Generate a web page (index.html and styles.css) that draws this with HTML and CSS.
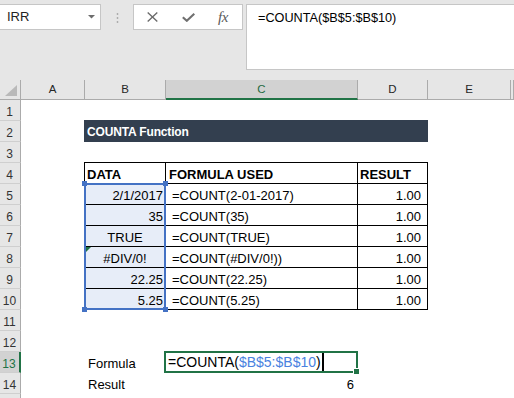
FILE: index.html
```html
<!DOCTYPE html>
<html>
<head>
<meta charset="utf-8">
<link rel="stylesheet" href="styles.css">
</head>
<body>
<div class="app">
  <header class="fbar">
    <div class="namebox">
      <span class="nb-text">IRR</span>
      <svg class="nb-caret" width="7" height="4" viewBox="0 0 7 4"><path d="M0 0H7L3.5 3.5Z"/></svg>
    </div>
    <svg class="grip" width="3" height="10" viewBox="0 0 3 10"><circle cx="1.5" cy="1" r="0.9"/><circle cx="1.5" cy="5" r="0.9"/><circle cx="1.5" cy="9" r="0.9"/></svg>
    <div class="fbtns">
      <svg class="ic-x" width="11" height="10" viewBox="0 0 11 10"><path d="M0.7 0.6L10.3 9.4M10.3 0.6L0.7 9.4"/></svg>
      <svg class="ic-check" width="13" height="9" viewBox="0 0 13 9"><path d="M0.8 4.2L4.8 7.8L12.3 0.8"/></svg>
      <span class="ic-fx">fx</span>
    </div>
    <div class="finput">=COUNTA($B$5:$B$10)</div>
  </header>

  <div class="sheet">
    <div class="corner"><svg width="12" height="11" viewBox="0 0 12 11"><path d="M0 11H12V0Z"/></svg></div>
    <div class="ch">A</div>
    <div class="ch">B</div>
    <div class="ch ch-sel">C</div>
    <div class="ch">D</div>
    <div class="ch">E</div>
    <div class="ch"></div>

    <div class="rowheads">
      <div class="rh">1</div>
      <div class="rh">2</div>
      <div class="rh">3</div>
      <div class="rh">4</div>
      <div class="rh">5</div>
      <div class="rh">6</div>
      <div class="rh">7</div>
      <div class="rh">8</div>
      <div class="rh">9</div>
      <div class="rh">10</div>
      <div class="rh">11</div>
      <div class="rh">12</div>
      <div class="rh sel">13</div>
      <div class="rh">14</div>
      <div class="rh"></div>
    </div>

    <div class="title">COUNTA Function</div>

    <div class="dtable">
      <div class="td th">DATA</div>
      <div class="td th hc">FORMULA USED</div>
      <div class="td th d">RESULT</div>

      <div class="td r fill">2/1/2017</div>
      <div class="td fc">=COUNT(2-01-2017)</div>
      <div class="td d r dv">1.00</div>

      <div class="td r fill">35</div>
      <div class="td fc">=COUNT(35)</div>
      <div class="td d r dv">1.00</div>

      <div class="td c fill">TRUE</div>
      <div class="td fc">=COUNT(TRUE)</div>
      <div class="td d r dv">1.00</div>

      <div class="td c fill"><span class="errtri"></span>#DIV/0!</div>
      <div class="td fc">=COUNT(#DIV/0!))</div>
      <div class="td d r dv">1.00</div>

      <div class="td r fill">22.25</div>
      <div class="td fc">=COUNT(22.25)</div>
      <div class="td d r dv">1.00</div>

      <div class="td r fill">5.25</div>
      <div class="td fc">=COUNT(5.25)</div>
      <div class="td d r dv">1.00</div>
    </div>

    <div class="refsel">
      <span class="hd tl"></span><span class="hd tr"></span><span class="hd bl"></span><span class="hd br"></span>
    </div>

    <div class="lbl l13">Formula</div>
    <div class="lbl l14">Result</div>

    <div class="active">
      <span class="atext">=COUNTA(<span class="ref">$B$5:$B$10</span>)</span><span class="caret"></span>
      <span class="fh"></span>
    </div>
    <div class="res">6</div>
  </div>
</div>
</body>
</html>
```

FILE: styles.css
```css
* { box-sizing: border-box; }

body {
  margin: 0;
  width: 514px;
  height: 398px;
  overflow: hidden;
  background: #ffffff;
  font-family: "Liberation Sans", Arial, sans-serif;
  color: #000;
}

.app {
  width: 514px;
  height: 398px;
  overflow: hidden;
}

/* ---------- formula bar ---------- */
.fbar {
  display: flex;
  align-items: flex-start;
  height: 80px;
  padding-top: 4px;
  background: #e6e6e6;
}

.namebox {
  width: 101px;
  height: 26px;
  flex: none;
  display: flex;
  align-items: center;
  background: #fff;
  border: 1px solid #c6c6c6;
  border-left: none;
  padding-left: 7px;
  font-size: 13px;
  line-height: 16px;
  color: #222;
}

.nb-caret {
  margin-left: auto;
  margin-right: 5px;
  fill: #6d6d6d;
}

.grip {
  flex: none;
  margin: 9px 0 0 15px;
  fill: #a8a8a8;
}

.fbtns {
  width: 110px;
  height: 26px;
  flex: none;
  margin-left: 14px;
  display: flex;
  align-items: center;
  padding-left: 13px;
  background: #fff;
  border: 1px solid #c6c6c6;
}

.ic-x {
  fill: none;
  stroke: #6b6b6b;
  stroke-width: 1.4;
}

.ic-check {
  margin-left: 24px;
  fill: none;
  stroke: #707070;
  stroke-width: 2.1;
}

.ic-fx {
  margin-left: 23px;
  font-family: "Liberation Serif", serif;
  font-style: italic;
  font-size: 15px;
  line-height: 16px;
  color: #5a5a5a;
  letter-spacing: -0.5px;
}

.finput {
  flex: 1;
  height: 66px;
  margin-left: 3px;
  margin-right: -2px;
  background: #fff;
  border: 1px solid #c6c6c6;
  padding: 5px 11px;
  font-size: 12.7px;
  line-height: 16px;
  white-space: nowrap;
}

/* ---------- sheet grid ---------- */
.sheet {
  display: grid;
  grid-template-columns: 21px 64px 81px 192px 70px 83px 1fr;
  grid-template-rows: 20px repeat(15, 21px);
  height: 318px;
  overflow: hidden;
  font-size: 13px;
}

.corner {
  grid-row: 1;
  grid-column: 1;
  background: #e6e6e6;
  border-right: 1px solid #ababab;
  border-bottom: 1px solid #ababab;
  display: flex;
  justify-content: flex-end;
  align-items: flex-end;
  padding: 0 3px 3px 0;
  fill: #b9b9b9;
}

.ch {
  grid-row: 1;
  background: #e6e6e6;
  border-right: 1px solid #ababab;
  border-bottom: 1px solid #ababab;
  display: flex;
  align-items: center;
  justify-content: center;
  font-size: 11.5px;
  line-height: 13px;
  color: #262626;
}

.ch-sel {
  background: #d2d2d2;
  border-bottom: 2px solid #217346;
  color: #1f6b42;
}

.rowheads {
  grid-column: 1;
  grid-row: 2 / span 15;
  display: flex;
  flex-direction: column;
}

.rh {
  flex: none;
  height: 21px;
  background: #e6e6e6;
  border-right: 1px solid #ababab;
  border-bottom: 1px solid #cfcfcf;
  display: flex;
  justify-content: center;
  align-items: flex-end;
  padding: 0 1px 1px 0;
  font-size: 12px;
  line-height: 14px;
  color: #333;
}

.rh.sel {
  background: #d2d2d2;
  border-right: 2px solid #217346;
  color: #217346;
}

/* ---------- title ---------- */
.title {
  grid-row: 3;
  grid-column: 3 / 6;
  margin: -1px 0 0 -1px;
  background: #333f4f;
  color: #fff;
  font-weight: bold;
  font-size: 12px;
  line-height: 14px;
  letter-spacing: -0.15px;
  display: flex;
  align-items: flex-end;
  padding: 0 0 3px 3px;
}

/* ---------- data table ---------- */
.dtable {
  grid-row: 5 / 12;
  grid-column: 3 / 6;
  margin: -1px 0 0 -1px;
  display: grid;
  grid-template-columns: 81px 192px 71px;
  grid-auto-rows: 21px;
  border-bottom: 1px solid #000;
}

.td {
  position: relative;
  border-top: 1px solid #000;
  border-left: 1px solid #000;
  display: flex;
  align-items: flex-end;
  padding: 0 2px 1px 2px;
  line-height: 15px;
  white-space: nowrap;
}

.td.d { border-right: 1px solid #000; }
.th { font-weight: bold; }
.th.hc { padding-left: 3px; }
.r { justify-content: flex-end; }
.c { justify-content: center; }
.fill { background: #e7edf8; }
.fc { padding-left: 6px; }
.dv { padding-right: 6px; }

.errtri {
  position: absolute;
  left: 1px;
  top: 0;
  width: 0;
  height: 0;
  border-top: 5px solid #1e7145;
  border-right: 5px solid transparent;
}

/* ---------- reference selection ---------- */
.refsel {
  grid-row: 6 / 12;
  grid-column: 3;
  margin: -1px 0 0 -1px;
  border: 2px solid #4472c4;
  position: relative;
}

.hd {
  position: absolute;
  width: 5px;
  height: 5px;
  background: #4472c4;
}
.hd.tl { left: -4px; top: -4px; }
.hd.tr { right: -4px; top: -4px; }
.hd.bl { left: -4px; bottom: -4px; }
.hd.br { right: -4px; bottom: -4px; }

/* ---------- formula / result rows ---------- */
.lbl {
  grid-column: 3;
  display: flex;
  align-items: flex-end;
  padding: 0 0 2px 3px;
  line-height: 15px;
}
.l13 { grid-row: 14; }
.l14 { grid-row: 15; }

.active {
  grid-row: 14;
  grid-column: 4;
  margin: -1px 0 0 -2px;
  border: 2px solid #217346;
  background: #fff;
  position: relative;
  display: flex;
  align-items: flex-end;
  padding: 0 0 1px 2px;
  font-size: 14px;
  line-height: 16px;
  white-space: nowrap;
}

.ref { color: #4a82e0; }

.caret {
  align-self: stretch;
  width: 2px;
  margin: 0 0 -1px 1px;
  background: #000;
}

.fh {
  position: absolute;
  right: -3px;
  bottom: -3px;
  width: 6px;
  height: 6px;
  background: #217346;
  border-left: 1px solid #fff;
  border-top: 1px solid #fff;
}

.res {
  grid-row: 15;
  grid-column: 4;
  display: flex;
  align-items: flex-end;
  justify-content: flex-end;
  padding: 0 4px 2px 0;
  line-height: 15px;
}
```
